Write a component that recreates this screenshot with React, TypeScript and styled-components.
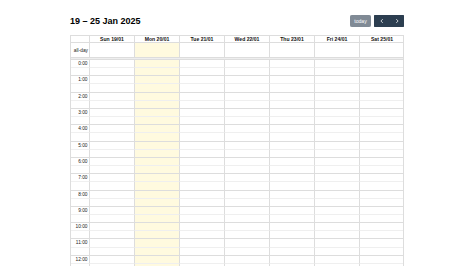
import styled, { createGlobalStyle } from "styled-components";

const days = ["Sun 19/01", "Mon 20/01", "Tue 21/01", "Wed 22/01", "Thu 23/01", "Fri 24/01", "Sat 25/01"];
const todayIndex = 1;
// only the part of the day that fits in the window (0:00 – 12:30)
const slots = Array.from({ length: 26 }, (_, i) => i);

const GlobalStyle = createGlobalStyle`
  html, body {
    margin: 0;
    padding: 0;
    background: #fff;
    font-family: "Liberation Sans", Arial, sans-serif;
    color: #222;
    -webkit-font-smoothing: antialiased;
  }
`;

export default function App() {
  return (
    <>
      <GlobalStyle />
      <Page>
        <Toolbar>
          <Title>19 – 25 Jan 2025</Title>
          <Controls>
            <TodayButton disabled>today</TodayButton>
            <ButtonGroup>
              <NavButton aria-label="prev">
                <Chevron viewBox="0 0 8 8">
                  <path d="M5 1.5 2.5 4 5 6.5" />
                </Chevron>
              </NavButton>
              <NavButton aria-label="next">
                <Chevron viewBox="0 0 8 8">
                  <path d="M3 1.5 5.5 4 3 6.5" />
                </Chevron>
              </NavButton>
            </ButtonGroup>
          </Controls>
        </Toolbar>

        <Grid>
          <HeaderRow>
            <AxisHead />
            {days.map(d => (
              <DayHead key={d}>{d}</DayHead>
            ))}
          </HeaderRow>

          <AllDayRow>
            <AxisLabel>all-day</AxisLabel>
            {days.map((d, i) => (
              <DayCell key={d} $today={i === todayIndex} />
            ))}
          </AllDayRow>

          <Divider />

          <Scroller>
            {slots.map(s => {
              const minor = s % 2 === 1;
              return (
                <SlotRow key={s}>
                  <SlotLabel $minor={minor}>{minor ? "" : `${s / 2}:00`}</SlotLabel>
                  {days.map((d, i) => (
                    <SlotCell key={d} $minor={minor} $today={i === todayIndex} />
                  ))}
                </SlotRow>
              );
            })}
          </Scroller>
        </Grid>
      </Page>
    </>
  );
}

const Page = styled.div`
  padding: 15px 70px 0;
`;

const Toolbar = styled.div`
  display: flex;
  align-items: center;
  justify-content: space-between;
  height: 12px;
  margin-bottom: 8px;
`;

const Title = styled.h2`
  margin: 0;
  font-size: 9px;
  font-weight: 700;
  color: #000;
  line-height: 1;
`;

const Controls = styled.div`
  display: flex;
  gap: 3px;
`;

const baseButton = `
  display: flex;
  align-items: center;
  justify-content: center;
  height: 12px;
  border: 1px solid #2c3e50;
  background: #2c3e50;
  color: #fff;
  font-family: "Liberation Sans", Arial, sans-serif;
  font-size: 5.1px;
  padding: 0;
  box-sizing: border-box;
`;

const TodayButton = styled.button`
  ${baseButton}
  width: 21px;
  border-radius: 1.3px;
  opacity: 0.6;
`;

const ButtonGroup = styled.div`
  display: flex;
  border-radius: 1.3px;
  overflow: hidden;
`;

const NavButton = styled.button`
  ${baseButton}
  width: 15px;
`;

const Chevron = styled.svg`
  width: 6px;
  height: 6px;
  fill: none;
  stroke: #fff;
  stroke-width: 1;
`;

const Grid = styled.div`
  width: 334px;
  border: 1px solid #ddd;
  border-bottom: none;
  box-sizing: border-box;
`;

const rowColumns = `
  display: grid;
  grid-template-columns: 18px repeat(7, 45px);
`;

const HeaderRow = styled.div`
  ${rowColumns}
  height: 6px;
`;

const AxisHead = styled.div``;

const DayHead = styled.div`
  border-left: 1px solid #ddd;
  font-size: 5.1px;
  font-weight: 700;
  color: #111;
  text-align: center;
  line-height: 6px;
  white-space: nowrap;
`;

const AllDayRow = styled.div`
  ${rowColumns}
  height: 15px;
`;

const AxisLabel = styled.div`
  display: flex;
  align-items: center;
  justify-content: flex-end;
  padding-right: 1px;
  border-top: 1px solid #ddd;
  font-size: 4.8px;
  color: #222;
  white-space: nowrap;
`;

const DayCell = styled.div<{ $today: boolean }>`
  border-top: 1px solid #ddd;
  border-left: 1px solid #ddd;
  background: ${p => (p.$today ? "#fffadf" : "transparent")};
`;

const Divider = styled.div`
  height: 2px;
  box-sizing: border-box;
  border-top: 1px solid #ddd;
  background: #eee;
`;

const Scroller = styled.div`
  height: calc(100vh - 59px);
  overflow: hidden;
`;

const SlotRow = styled.div`
  ${rowColumns}
  height: 8.17px;
`;

const SlotLabel = styled.div<{ $minor: boolean }>`
  border-top: 1px solid ${p => (p.$minor ? "#f0f0f0" : "#ddd")};
  font-size: 4.8px;
  color: #222;
  text-align: right;
  padding-right: 1.5px;
  line-height: 7px;
  white-space: nowrap;
`;

const SlotCell = styled.div<{ $minor: boolean; $today: boolean }>`
  border-top: 1px solid ${p => (p.$minor ? "#efefef" : "#ddd")};
  border-left: 1px solid #ddd;
  background: ${p => (p.$today ? "#fffadf" : "transparent")};
`;
